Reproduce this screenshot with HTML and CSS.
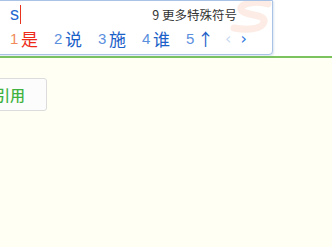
FILE: index.html
```html
<!DOCTYPE html>
<html lang="zh">
<head>
    <meta charset="UTF-8">
    <title>输入法</title>
    <link rel="stylesheet" href="styles.css">
</head>
<body>
    <div class="topbar"></div>
    <div class="page">
        <button class="quote-btn">引用</button>
    </div>

    <!-- 输入法候选窗口 -->
    <div class="ime">
        <svg class="ime-logo" width="50" height="40" viewBox="0 0 50 40">
            <path d="M46 4 C34 0 14 4 20 11 C25 16 44 14 42 22 C40 30 24 30 12 28" fill="none" stroke="#f7c9b4" stroke-width="7" stroke-linecap="round" opacity="0.35"/>
        </svg>
        <div class="ime-input">
            <span class="pinyin">s</span><span class="caret"></span>
            <span class="more">9 更多特殊符号</span>
        </div>
        <div class="ime-cands">
            <span class="cand first"><i>1</i>是</span>
            <span class="cand"><i>2</i>说</span>
            <span class="cand"><i>3</i>施</span>
            <span class="cand"><i>4</i>谁</span>
            <span class="cand"><i>5</i>↑</span>
            <span class="pager"><b class="off">‹</b><b>›</b></span>
        </div>
    </div>
</body>
</html>
```

FILE: styles.css
```css
* {
    margin: 0;
    padding: 0;
    box-sizing: border-box;
}

body {
    margin: 0;
    overflow: hidden;
    background-color: #fff;
    font-family: "Noto Sans CJK SC", "Liberation Sans", sans-serif;
    height: 247px;
}

.topbar {
    height: 56px;
    background-color: #fff;
}

.page {
    border-top: 2px solid #7cc35e;
    background-color: #fffff3;
    height: 191px;
    padding-top: 20px;
}

.quote-btn {
    display: block;
    margin-left: -30px;
    width: 77px;
    height: 33px;
    border: 1px solid #dcdcdc;
    border-radius: 3px;
    background-color: #fcfcfc;
    color: #3fb23f;
    font-family: "Noto Sans CJK SC", sans-serif;
    font-size: 15px;
    font-weight: 500;
    text-align: right;
    padding-right: 21px;
}

.ime {
    position: absolute;
    top: 0;
    left: -6px;
    width: 279px;
    height: 55px;
    border: 1px solid #a9c3e6;
    border-radius: 0 0 4px 0;
    background-color: #fff;
    overflow: hidden;
    box-shadow: 1px 1px 2px rgba(120,150,200,0.25);
}

.ime-logo {
    position: absolute;
    right: 0;
    top: -1px;
}

.ime-input {
    position: relative;
    display: flex;
    align-items: center;
    height: 26px;
    padding-left: 15px;
    padding-right: 35px;
}

.pinyin {
    color: #2266d0;
    font-family: "Liberation Sans", sans-serif;
    font-size: 18px;
    line-height: 20px;
}

.caret {
    display: inline-block;
    width: 1px;
    height: 19px;
    margin-left: 1px;
    background-color: #e8321e;
}

.more {
    margin-left: auto;
    color: #333;
    font-size: 12.5px;
}

.ime-cands {
    position: relative;
    display: flex;
    align-items: center;
    height: 23px;
    padding-left: 15px;
}

.cand {
    display: flex;
    align-items: center;
    width: 44px;
    color: #1b5fc8;
    font-size: 17px;
}

.cand i {
    font-style: normal;
    font-family: "Liberation Sans", sans-serif;
    font-size: 15px;
    color: #5b8fde;
    width: 11px;
}

.cand.first {
    color: #ee2b18;
}

.cand.first i {
    color: #f08a5a;
}

.pager {
    display: flex;
    gap: 9px;
    margin-left: -5px;
    font-family: "DejaVu Sans", sans-serif;
}

.pager b {
    font-weight: normal;
    font-size: 16px;
    color: #2d78e0;
}

.pager b.off {
    color: #c9daf3;
}
```
